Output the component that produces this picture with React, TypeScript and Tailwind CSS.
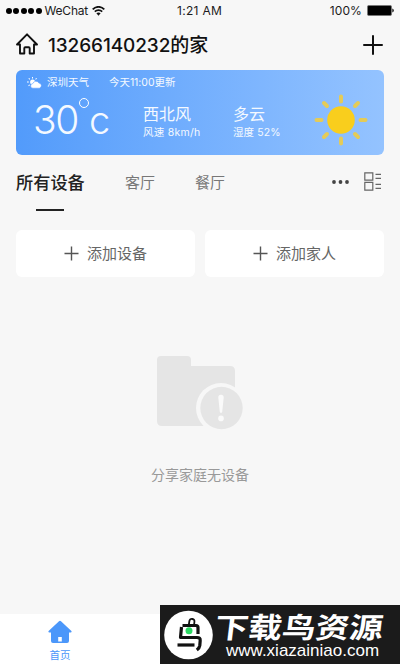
import React from "react";

const SANS = "font-['Inter','Noto_Sans_CJK_SC',sans-serif]";

function StatusBar() {
  return (
    <div className="flex h-[22px] items-center pl-[6px] pr-[6px] text-[12px] leading-[22px] text-[#1c1c1c]">
      <div className="flex w-[171px] items-center">
        <div className="flex gap-[1.4px]">
          {[0, 1, 2, 3, 4].map((i) => (
            <span key={i} className="size-[6px] rounded-full bg-black" />
          ))}
        </div>
        <span className="ml-[3px] tracking-[-0.2px]">WeChat</span>
        <svg className="ml-[4px]" width="13" height="10" viewBox="0 0 13 10" fill="none" stroke="#111" strokeWidth="1.7">
          <path d="M.7 3.4C4-.1 9-.1 12.3 3.4M2.8 5.7c2.1-2.1 5.3-2.1 7.4 0" />
          <path d="M4.4 7.3c1.2-1.2 3-1.2 4.2 0L6.5 9.7z" fill="#111" stroke="none" />
        </svg>
      </div>
      <span className="whitespace-nowrap tracking-[0.3px]">1:21 AM</span>
      <span className="ml-auto tracking-[0.1px]">100%</span>
      <svg className="mb-[1px] ml-[5px]" width="27" height="11" viewBox="0 0 27 11">
        <rect x=".5" y=".5" width="24" height="10" rx="1.3" fill="#000" stroke="#777" />
        <path d="M25.3 3.5q1.5.5 1.5 2t-1.5 2z" fill="#111" />
      </svg>
    </div>
  );
}

function Header() {
  return (
    <header className="flex h-[48px] items-center pl-[16px] pr-[16px]">
      <svg className="mb-[4px]" width="22" height="22" viewBox="0 0 22 22" fill="none" stroke="#111" strokeWidth="1.9" strokeLinecap="round" strokeLinejoin="round">
        <path d="M4 11.5H1L11 1.3l10 10.2h-3v9h-4.3v-5.3q0-1-1-1H9.3q-1 0-1 1v5.3H4z" />
      </svg>
      <h1 className="ml-[10px] whitespace-nowrap text-[19px] font-medium leading-[26px] tracking-[-0.1px] text-[#111]">13266140232的家</h1>
      <svg className="ml-auto mb-[3px]" width="22" height="20" viewBox="0 0 22 20" stroke="#111" strokeWidth="2" strokeLinecap="round">
        <path d="M2 10h18M11 1v18" />
      </svg>
    </header>
  );
}

function Sun() {
  return (
    <svg width="54" height="52" viewBox="-27 -26 54 52">
      <circle r="13.8" fill="#f9ce1d" />
      <g stroke="#e4cb58" strokeWidth="4" strokeLinecap="round">
        <path d="M0-23.5v5M0 18.5v5M-24.5 0h5M19.5 0h5M-17-17l3 3M14 14l3 3M-17 17l3-3M14-14l3-3" />
      </g>
    </svg>
  );
}

function Weather() {
  return (
    <section className="mx-[16px] flex h-[85px] rounded-[6px] bg-linear-to-r from-[#529bfb] to-[#94c3ff] text-[#f4f9ff]">
      <div className="flex w-[127px] shrink-0 flex-col pl-[11px]">
        <div className="mt-[5px] flex h-[15px] items-center whitespace-nowrap text-[10.5px] leading-[15px]">
          <svg className="shrink-0" width="15" height="12" viewBox="0 0 15 12" fill="#fff">
            <circle cx="5.6" cy="5" r="2.5" />
            <path d="M5 0h1v1.6H5zM0 4.6h1.8v1H0zM1.4 1.6l.7-.7 1.1 1.1-.7.7zM8.2 2l1.1-1.1.7.7-1.1 1.1zM1.2 8.6l1.2-1.2.7.7-1.2 1.2z" />
            <path d="M6 11.2a2.3 2.3 0 0 1-.2-4.6 3.3 3.3 0 0 1 6-.7 2.7 2.7 0 0 1 .6 5.3z" stroke="#629fff" strokeWidth=".6" />
          </svg>
          <span className="ml-[5px] w-[62px] shrink-0">深圳天气</span>
          <span className="tracking-[-0.05px]">今天11:00更新</span>
        </div>
        <div className="mt-[6px] flex h-[48px] items-center pl-[6px] font-light leading-[48px]">
          <span className="text-[39px] tracking-[-1.4px]">30</span>
          <span className="mb-[34px] ml-[1px] size-[10px] shrink-0 rounded-full border-[1.6px] border-white" />
          <span className="text-[38px]">c</span>
        </div>
      </div>
      <div className="w-[90px] pt-[34px]">
        <p className="text-[16px] leading-[20px]">西北风</p>
        <p className="mt-[1px] whitespace-nowrap text-[10.5px] leading-[15px] tracking-[0.25px]">风速 8km/h</p>
      </div>
      <div className="pt-[34px]">
        <p className="text-[16px] leading-[20px]">多云</p>
        <p className="mt-[1px] whitespace-nowrap text-[10.5px] leading-[15px] tracking-[0.1px]">湿度 52%</p>
      </div>
      <div className="ml-auto mr-[16px] mt-[24px]">
        <Sun />
      </div>
    </section>
  );
}

function Tabs() {
  return (
    <nav className="flex h-[75px] pl-[16px] pr-[18px] text-[15px] leading-[24px] text-[#777]">
      <div className="flex w-[109px] flex-col pt-[16px]">
        <span className="text-[17.2px] font-medium text-[#222]">所有设备</span>
        <span className="ml-[20px] mt-[14px] h-[2px] w-[28px] bg-[#222]" />
      </div>
      <span className="w-[70px] pt-[16px]">客厅</span>
      <span className="pt-[16px]">餐厅</span>
      <svg className="ml-auto mt-[25px]" width="18" height="4" viewBox="0 0 18 4" fill="#444">
        <circle cx="2" cy="2" r="1.9" />
        <circle cx="8.5" cy="2" r="1.9" />
        <circle cx="15" cy="2" r="1.9" />
      </svg>
      <svg className="ml-[14px] mt-[17px]" width="18" height="19" viewBox="0 0 18 19" fill="none" stroke="#666" strokeWidth="1.2">
        <path d="M.8.8h8v7.4h-8zM.8 10.3h8v7.8h-8zM11.5 2.4H17M11.5 6.3H17M11.5 12.3H17M11.5 16.3H17" />
      </svg>
    </nav>
  );
}

function AddButton({ label }: { label: string }) {
  return (
    <button className="flex h-[47px] flex-1 items-center justify-center gap-[8px] rounded-[6px] bg-white text-[15px] text-[#666]">
      <svg width="15" height="15" viewBox="0 0 15 15" stroke="#555" strokeWidth="1.4">
        <path d="M.5 7.5h14M7.5.5v14" />
      </svg>
      <span className="pt-[2px]">{label}</span>
    </button>
  );
}

function EmptyState() {
  return (
    <div className="flex flex-1 flex-col items-center pt-[78px]">
      <svg width="88" height="76" viewBox="0 0 88 76">
        <path d="M5 1h26q4 0 4 4v6h39q5 0 5 5v55H6q-5 0-5-5V5q0-4 4-4z" fill="#e5e5e5" />
        <circle cx="65" cy="53" r="25" fill="#f7f7f7" />
        <circle cx="65.5" cy="53" r="21.2" fill="#e5e5e5" />
        <path d="M62.3 42.5q0-2.7 2.7-2.7t2.7 2.7L66.2 57q-1.2 2-2.4 0z" fill="#fafafa" />
        <circle cx="65" cy="63.4" r="2.8" fill="#fafafa" />
      </svg>
      <p className="mt-[34px] text-[14px] leading-[20px] text-[#999]">分享家庭无设备</p>
    </div>
  );
}

function BrandBanner() {
  return (
    <div className="absolute bottom-[2px] left-[160px] flex h-[59px] w-[240px] items-center bg-[#1b1b1b] pl-[4px] text-white">
      <svg width="49" height="50" viewBox="0 0 49 50" className="shrink-0">
        <circle cx="24.5" cy="25" r="24.3" fill="#fff" />
        <g fill="none" stroke="#111" strokeWidth="3.2" strokeLinejoin="round">
          <path d="M18.5 15.5H32q2 0 2 2V24" />
          <path d="M17.5 17L16.5 27.5H33q3.5 0 3.2 3l-.4 5q-.3 2.5-3 4.5" />
          <path d="M13.5 35h17" />
          <path d="M24.8 15l.6-4q.5-2.5 3-2t2 3l-.4 3.5" strokeWidth="1.8" />
        </g>
        <circle cx="25" cy="20.8" r="3.5" fill="#2bd963" />
      </svg>
      <div className="ml-[2px] flex flex-col pt-[3px]">
        <span className="h-[28px] origin-left scale-x-[1.18] -skew-x-6 whitespace-nowrap font-['Noto_Sans_CJK_SC',sans-serif] text-[28.5px] font-bold leading-[26px]">下载鸟资源</span>
        <span className="ml-[11px] whitespace-nowrap font-['Liberation_Sans',sans-serif] text-[17px] leading-[19px]">www.xiazainiao.com</span>
      </div>
    </div>
  );
}

export default function App() {
  return (
    <main className={`relative flex h-[666px] w-[400px] flex-col overflow-hidden bg-[#f7f7f7] ${SANS}`}>
      <StatusBar />
      <Header />
      <Weather />
      <Tabs />
      <div className="flex gap-[10px] px-[16px]">
        <AddButton label="添加设备" />
        <AddButton label="添加家人" />
      </div>
      <EmptyState />
      <footer className="h-[52px] bg-white">
        <div className="flex w-[120px] flex-col items-center pt-[6px] text-[10.5px] leading-[15px] text-[#4b97fa]">
          <svg width="24" height="24" viewBox="0 0 24 24" fill="#4b97fa">
            <path fillRule="evenodd" d="M11 1.2q1-.8 2 0L23.4 11q.7 1.4-.8 1.5H21V21q0 2-2 2H5q-2 0-2-2v-8.5H1.4Q-.1 12.4.6 11zM10.2 17v4.5h3.6V17z" />
          </svg>
          <span className="mt-[4px]">首页</span>
        </div>
      </footer>
      <BrandBanner />
    </main>
  );
}
